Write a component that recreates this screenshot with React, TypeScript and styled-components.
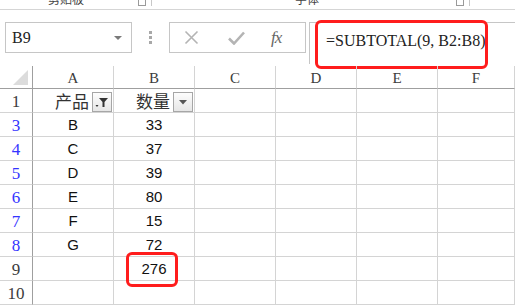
import styled, { createGlobalStyle } from "styled-components";

const Global = createGlobalStyle`
  html, body { margin: 0; padding: 0; background: #fff; }
  body { width: 515px; height: 307px; overflow: hidden; }
`;

const Page = styled.div`
  width: 515px;
  height: 307px;
  overflow: hidden;
  display: flex;
  flex-direction: column;
  background: #fff;
`;

/* ---------- ribbon remnant ---------- */
const Ribbon = styled.div`
  height: 9px;
  flex: none;
  border-bottom: 1px solid #d5d5d5;
  display: flex;
  overflow: hidden;
`;

const RibbonGroup = styled.div<{ $w: number }>`
  width: ${(p) => p.$w}px;
  flex: none;
  position: relative;
  display: flex;
  justify-content: center;
  &::after {
    content: "";
    position: absolute;
    right: 0;
    top: 0;
    height: 6px;
    border-right: 1px solid #c8c8c8;
  }
`;

const RibbonLabel = styled.span<{ $shift: number }>`
  font: 12px/12px "Noto Sans CJK SC", sans-serif;
  color: #444;
  margin-top: -7px;
  margin-left: ${(p) => p.$shift}px;
`;

const Launcher = styled.span`
  position: absolute;
  right: 6px;
  top: 0;
  width: 6px;
  height: 5px;
  border: 1px solid #9a9a9a;
  border-top: none;
`;

/* ---------- formula bar ---------- */
const FormulaRow = styled.div`
  height: 56px;
  flex: none;
  display: flex;
  align-items: flex-start;
  padding: 12px 0 0 5px;
  box-sizing: border-box;
`;

const NameBox = styled.div`
  width: 127px;
  height: 31px;
  box-sizing: border-box;
  border: 1px solid #c6c6c6;
  display: flex;
  align-items: center;
  padding: 0 6px;
  font: 16px "Liberation Serif", serif;
  color: #222;
`;

const NameText = styled.span`
  flex: 1;
`;

const Caret = styled.span`
  width: 0;
  height: 0;
  border-left: 4px solid transparent;
  border-right: 4px solid transparent;
  border-top: 4px solid #7a7a7a;
  margin-right: 3px;
`;

const Grip = styled.div`
  width: 37px;
  height: 31px;
  display: flex;
  flex-direction: column;
  align-items: center;
  justify-content: center;
  gap: 2px;
`;

const GripDot = styled.span`
  width: 3px;
  height: 3px;
  background: #a8a8a8;
`;

const Tools = styled.div`
  width: 137px;
  height: 31px;
  box-sizing: border-box;
  border: 1px solid #c6c6c6;
  display: flex;
  align-items: center;
  padding-left: 14px;
`;

const ToolIcon = styled.span<{ $w: number }>`
  width: ${(p) => p.$w}px;
  display: flex;
  align-items: center;
`;

const Fx = styled.span`
  font: italic 17px "Liberation Serif", serif;
  color: #666;
  letter-spacing: -1px;
`;

const FormulaBox = styled.div`
  position: relative;
  margin-left: 3px;
  flex: 1;
  height: 42px;
  box-sizing: border-box;
  border: 1px solid #c6c6c6;
  border-right: none;
  border-bottom: none;
  padding: 8px 0 0 16px;
  font: 16px/20px "Liberation Serif", serif;
  color: #222;
`;

const Highlight = styled.div`
  position: absolute;
  box-sizing: border-box;
  border: 3.5px solid #ff1c1c;
  border-radius: 6px;
  pointer-events: none;
`;

/* ---------- sheet grid ---------- */
const Sheet = styled.div`
  flex: 1;
  display: grid;
  grid-template-columns: 33px repeat(5, 81px) 1fr;
  grid-template-rows: 23px;
  grid-auto-rows: 24px;
`;

const Cell = styled.div`
  position: relative;
  box-sizing: border-box;
  border-right: 1px solid #d4d4d4;
  border-bottom: 1px solid #d4d4d4;
  display: flex;
  align-items: center;
  justify-content: center;
  font: 15px "Liberation Sans", Arial, sans-serif;
  color: #111;
`;

const ColHead = styled(Cell)`
  border-bottom-color: #9f9f9f;
  font: 15px "Liberation Serif", serif;
  color: #3c3c3c;
  padding-top: 2px;
`;

const Corner = styled(ColHead)`
  border-right-color: #9f9f9f;
`;

const RowHead = styled(Cell)<{ $hidden?: boolean }>`
  border-right-color: #9f9f9f;
  font: 17px "Liberation Serif", serif;
  color: ${(p) => (p.$hidden ? "#3434ff" : "#3c3c3c")};
  padding-top: 2px;
`;

const HeaderText = styled.span`
  font: 17px "Noto Sans CJK SC", sans-serif;
  color: #333;
  margin-left: -2px;
`;

const FilterBtn = styled.span`
  position: absolute;
  right: 1px;
  bottom: 0;
  width: 20px;
  height: 20px;
  box-sizing: border-box;
  border: 1px solid #a6a6a6;
  background: linear-gradient(#fdfdfd, #e6e6e6);
  display: flex;
  align-items: center;
  justify-content: center;
`;

const columns = ["A", "B", "C", "D", "E", "F"];

type Row = { n: string; a: string; b: string; hidden?: boolean };

const rows: Row[] = [
  { n: "3", a: "B", b: "33", hidden: true },
  { n: "4", a: "C", b: "37", hidden: true },
  { n: "5", a: "D", b: "39", hidden: true },
  { n: "6", a: "E", b: "80", hidden: true },
  { n: "7", a: "F", b: "15", hidden: true },
  { n: "8", a: "G", b: "72", hidden: true },
  { n: "9", a: "", b: "276" },
  { n: "10", a: "", b: "" },
];

function Empties({ count }: { count: number }) {
  return (
    <>
      {Array.from({ length: count }).map((_, i) => (
        <Cell key={i} />
      ))}
    </>
  );
}

function RowFragment({ row }: { row: Row }) {
  return (
    <>
      <RowHead $hidden={row.hidden}>{row.n}</RowHead>
      <Cell>{row.a}</Cell>
      <Cell>
        {row.b}
        {row.b === "276" && <Highlight style={{ left: 12, top: -5, width: 52, height: 35 }} />}
      </Cell>
      <Empties count={4} />
    </>
  );
}

export default function App() {
  return (
    <Page>
      <Global />
      <Ribbon>
        <RibbonGroup $w={152}>
          <RibbonLabel $shift={-20}>剪贴板</RibbonLabel>
          <Launcher />
        </RibbonGroup>
        <RibbonGroup $w={318}>
          <RibbonLabel $shift={-8}>字体</RibbonLabel>
          <Launcher />
        </RibbonGroup>
      </Ribbon>

      <FormulaRow>
        <NameBox>
          <NameText>B9</NameText>
          <Caret />
        </NameBox>
        <Grip>
          <GripDot />
          <GripDot />
          <GripDot />
        </Grip>
        <Tools>
          <ToolIcon $w={44}>
            <svg width="15" height="15" viewBox="0 0 15 15">
              <path d="M1.5 1.5 L13.5 13.5 M13.5 1.5 L1.5 13.5" stroke="#b4b4b4" strokeWidth="1.6" fill="none" />
            </svg>
          </ToolIcon>
          <ToolIcon $w={43}>
            <svg width="17" height="14" viewBox="0 0 17 14">
              <path d="M1 7.5 L6 12.5 L16 1.5" stroke="#b4b4b4" strokeWidth="2.6" fill="none" />
            </svg>
          </ToolIcon>
          <ToolIcon $w={24}>
            <Fx>fx</Fx>
          </ToolIcon>
        </Tools>
        <FormulaBox>
          =SUBTOTAL(9, B2:B8)
          <Highlight style={{ left: 5, top: -3, width: 173, height: 49 }} />
        </FormulaBox>
      </FormulaRow>

      <Sheet>
        <Corner>
          <svg width="17" height="16" viewBox="0 0 17 16" style={{ position: "absolute", left: 12, top: 4 }}>
            <polygon points="16,0 16,15 1,15" fill="#dcdcdc" />
          </svg>
        </Corner>
        {columns.map((c) => (
          <ColHead key={c}>{c}</ColHead>
        ))}

        <RowHead>1</RowHead>
        <Cell>
          <HeaderText>产品</HeaderText>
          <FilterBtn>
            <svg width="14" height="12" viewBox="0 0 14 12">
              <polygon points="4,2 13,2 9.5,6 9.5,11 7.5,11 7.5,6" fill="#333" />
              <polygon points="0.5,9 3.5,9 2,11" fill="#333" />
            </svg>
          </FilterBtn>
        </Cell>
        <Cell>
          <HeaderText>数量</HeaderText>
          <FilterBtn>
            <svg width="8" height="5" viewBox="0 0 8 5">
              <polygon points="0,0 8,0 4,4.5" fill="#555" />
            </svg>
          </FilterBtn>
        </Cell>
        <Empties count={4} />

        {rows.map((r) => (
          <RowFragment key={r.n} row={r} />
        ))}
      </Sheet>
    </Page>
  );
}
